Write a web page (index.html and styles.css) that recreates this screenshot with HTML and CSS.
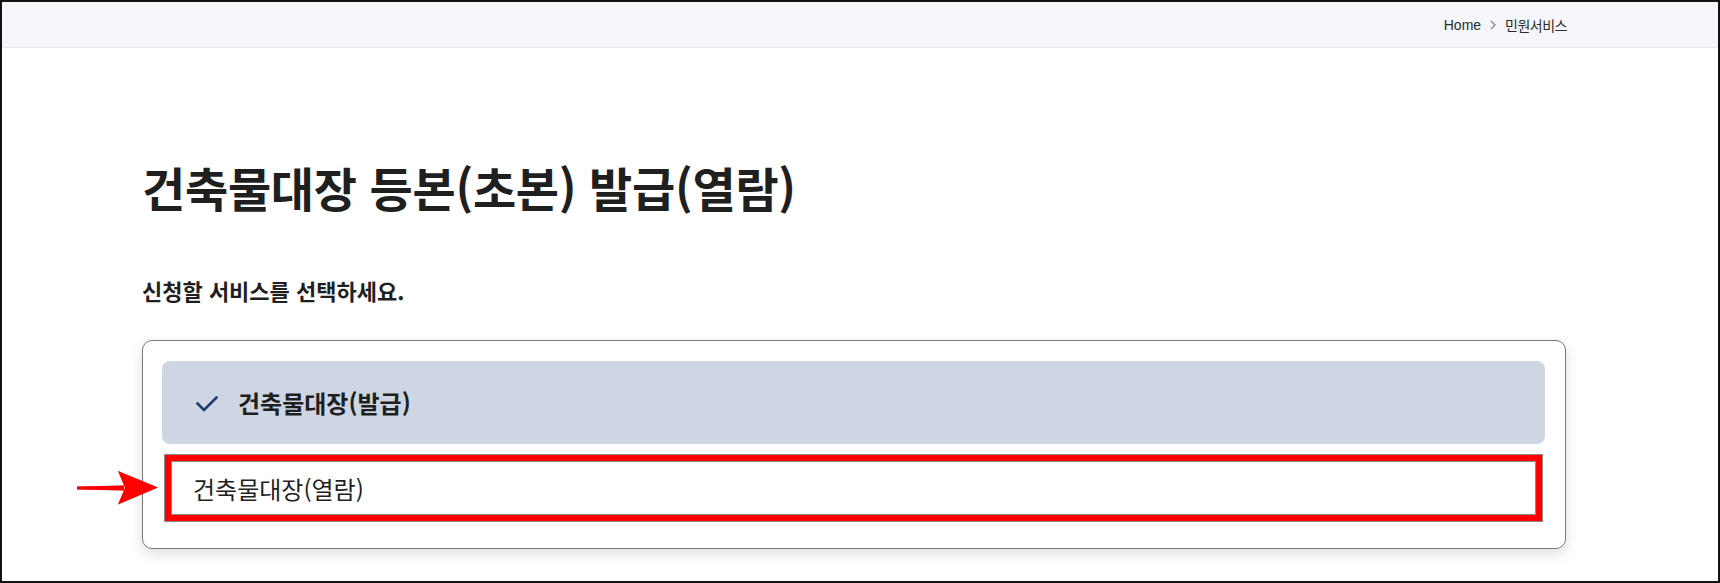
FILE: index.html
```html
<!DOCTYPE html>
<html lang="ko">
<head>
    <meta charset="UTF-8">
    <meta name="viewport" content="width=device-width, initial-scale=1.0">
    <title>건축물대장 등본(초본) 발급(열람)</title>
    <link rel="stylesheet" href="styles.css">
</head>
<body>
    <div class="frame">
        <header class="top-bar">
            <nav class="breadcrumb">
                <span class="crumb">Home</span>
                <svg class="crumb-sep" width="6" height="10" viewBox="0 0 6 10">
                    <path d="M1 1 L5 5 L1 9" fill="none" stroke="#8a8a8a" stroke-width="1.4"/>
                </svg>
                <span class="crumb crumb-ko">민원서비스</span>
            </nav>
        </header>

        <main class="content">
            <h1 class="page-title">건축물대장 등본(초본) 발급(열람)</h1>
            <p class="lead">신청할 서비스를 선택하세요.</p>

            <div class="option-card">
                <!-- annotation arrow -->
                <svg class="pointer-arrow" width="82" height="35" viewBox="0 0 82 35">
                    <path d="M0 15.6 L47 14.6 L47 19.4 L0 18.4 Z" fill="#ff0000"/>
                    <path d="M41 0 L81 16.5 L41 33.5 L48 16.8 Z" fill="#ff0000"/>
                </svg>

                <div class="option option-selected">
                    <svg class="check" width="22" height="16" viewBox="0 0 22 16">
                        <path d="M1.5 7.5 L8 14 L20.5 1.5" fill="none" stroke="#1e3c6e" stroke-width="2.6" stroke-linecap="round" stroke-linejoin="round"/>
                    </svg>
                    <span>건축물대장(발급)</span>
                </div>
                <div class="option option-marked">
                    <span>건축물대장(열람)</span>
                </div>
            </div>
        </main>
    </div>
</body>
</html>
```

FILE: styles.css
```css
* {
    margin: 0;
    padding: 0;
    box-sizing: border-box;
}

body {
    font-family: "Noto Sans CJK KR", "Noto Sans", sans-serif;
    color: #1f1f1f;
    background: #fff;
}

.frame {
    height: 583px;
    border: 2px solid #111;
    overflow: hidden;
}

.top-bar {
    height: 46px;
    background: #f5f6fa;
    border-bottom: 1px solid #e3e5ea;
    display: flex;
    justify-content: flex-end;
    align-items: center;
    padding-right: 151px;
}

.breadcrumb {
    display: flex;
    align-items: center;
    gap: 9px;
    font-family: "Liberation Sans", "Noto Sans CJK KR", sans-serif;
    font-size: 14px;
    color: #2a2a2a;
}

.crumb-ko {
    letter-spacing: -0.5px;
}

.crumb-sep {
    margin-top: 1px;
}

.content {
    padding: 109px 152px 0 140px;
}

.page-title {
    font-size: 47px;
    font-weight: 700;
    line-height: 60px;
    letter-spacing: -0.3px;
    color: #1f1f1f;
}

.lead {
    margin-top: 59px;
    font-size: 22px;
    font-weight: 700;
    line-height: 28px;
    color: #1f1f1f;
}

.option-card {
    position: relative;
    margin-top: 36px;
    border: 1px solid #777;
    border-radius: 10px;
    padding: 20px 20px 27px 19px;
    box-shadow: 0 5px 14px rgba(0, 0, 0, 0.13);
    display: flex;
    flex-direction: column;
    gap: 11px;
}

.pointer-arrow {
    position: absolute;
    left: -66px;
    top: 130px;
    filter: drop-shadow(0 0 0.6px rgba(90, 90, 90, 0.6));
}

.option {
    display: flex;
    align-items: center;
    font-size: 24px;
    color: #1f1f1f;
}

.option-selected {
    height: 83px;
    background: #cdd6e2;
    border-radius: 8px;
    padding-left: 34px;
    gap: 20px;
    font-weight: 700;
}

.check {
    margin-top: 2px;
}

.option-marked {
    height: 66px;
    margin: 0 3px;
    border: 6px solid #ff0000;
    box-shadow: 0 0 0 1px #8a8a8a, inset 0 0 0 1px #8a8a8a;
    padding-left: 22px;
    font-weight: 400;
}
```
